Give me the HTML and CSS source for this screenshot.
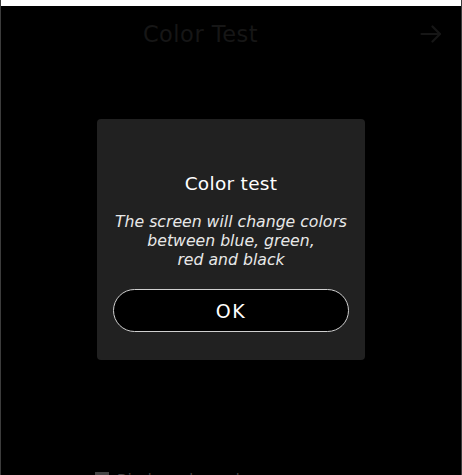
FILE: index.html
```html
<!DOCTYPE html>
<html lang="en">
<head>
<meta charset="utf-8">
<title>Color Test</title>
<link rel="stylesheet" href="styles.css">
</head>
<body>
<div class="frame">
  <div class="topstrip"></div>
  <header class="header">
    <h1 class="header-title">Color Test</h1>
    <div class="header-action">
      <svg class="arrow" width="22" height="18" viewBox="0 0 22 18" fill="none" stroke="currentColor" stroke-width="2.2" stroke-linecap="round" stroke-linejoin="round">
        <path d="M1.5 9 H20"/>
        <path d="M12.5 1.5 L20 9 L12.5 16.5"/>
      </svg>
    </div>
  </header>
  <main class="content"></main>
  <footer class="footer">
    <span class="footer-icon"></span>
    <span class="footer-text">Display color cycle</span>
  </footer>
</div>
<div class="overlay">
  <div class="dialog">
    <h2 class="dialog-title">Color test</h2>
    <p class="dialog-text">The screen will change colors<br>between blue, green,<br>red and black</p>
    <button class="dialog-button">OK</button>
  </div>
</div>
</body>
</html>
```

FILE: styles.css
```css
html, body {
  margin: 0;
  padding: 0;
  background: #000;
  height: 100%;
  overflow: hidden;
}

body {
  font-family: "DejaVu Sans", "Open Sans", sans-serif;
}

.frame {
  height: 100%;
  display: flex;
  flex-direction: column;
  border-left: 1px solid #3c3c3c;
  border-right: 1px solid #3c3c3c;
  box-sizing: border-box;
}

.topstrip {
  height: 6px;
  background: #fff;
  flex: none;
}

.header {
  display: grid;
  grid-template-columns: 1fr 61px;
  align-items: center;
  height: 56px;
  flex: none;
}

.header-title {
  margin: 0;
  font-weight: 400;
  font-size: 22.5px;
  letter-spacing: 0.5px;
  color: #161616;
  text-align: center;
  padding-bottom: 1px;
}

.header-action {
  display: flex;
  justify-content: flex-end;
  padding-right: 19px;
  color: #161616;
}

.arrow {
  display: block;
}

.content {
  flex: 1;
}

.footer {
  flex: none;
  height: 3px;
  display: flex;
  align-items: flex-start;
  gap: 8px;
  padding-left: 94px;
  overflow: hidden;
}

.footer-icon {
  width: 14px;
  height: 10px;
  background: #444;
}

.footer-text {
  font-size: 14px;
  color: #444;
  line-height: 14px;
}

.overlay {
  position: fixed;
  inset: 0;
  display: flex;
  align-items: center;
  justify-content: center;
  padding-top: 4px;
}

.dialog {
  width: 268px;
  box-sizing: border-box;
  background: #212121;
  border-radius: 4px;
  padding: 54px 16px 28px;
  text-align: center;
  color: #fff;
}

.dialog-title {
  margin: 0;
  font-weight: 400;
  font-size: 18.5px;
  line-height: 22px;
  letter-spacing: 0.3px;
}

.dialog-text {
  margin: 17px 0 0;
  font-style: italic;
  font-size: 15.7px;
  line-height: 19px;
  color: #e8e8e8;
}

.dialog-button {
  display: block;
  margin-top: 20px;
  width: 100%;
  height: 43px;
  border-radius: 22px;
  border: 1px solid #cfcfcf;
  background: #000;
  color: #fff;
  font-family: inherit;
  font-size: 19px;
  letter-spacing: 1.5px;
  cursor: pointer;
}
```
